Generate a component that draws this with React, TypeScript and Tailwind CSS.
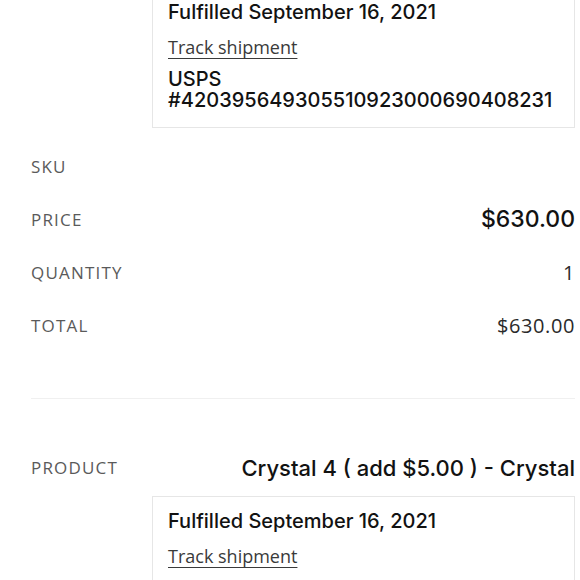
const heading = "font-['Inter','Liberation_Sans',sans-serif]";
const body = "font-['Open_Sans','Liberation_Sans',sans-serif]";

function Fulfillment({ tracking }: { tracking?: string }) {
    return (
        <div className="ml-[121px] border border-[#e6e6e6] px-[15px] pt-[11px] pb-[16px]">
            <p className={`${heading} text-[20px] leading-[26px] font-medium text-[#121212]`}>Fulfilled September 16, 2021</p>
            <a href="#" className={`${body} mt-[9px] block w-fit text-[18px] leading-[26px] text-[#3a3a3a] underline underline-offset-[4px] decoration-[1px]`}>
                Track shipment
            </a>
            {tracking && (
                <div className={`${heading} mt-[9px] text-[20px] font-medium text-[#121212]`}>
                    <p className="leading-[20px]">USPS</p>
                    <p className="leading-[22px]">{tracking}</p>
                </div>
            )}
        </div>
    );
}

function Row({ label, value, strong }: { label: string; value?: string; strong?: boolean }) {
    return (
        <div className="flex items-center justify-between h-[53px]">
            <span className={`${body} text-[17px] tracking-[0.07em] text-[#5a5a5a]`}>{label}</span>
            {value && (
                <span className={strong ? `${heading} text-[23px] font-medium text-[#121212]` : `${body} text-[20px] tracking-[0.03em] text-[#2a2a2a]`}>
                    {value}
                </span>
            )}
        </div>
    );
}

export default function App() {
    return (
        <div className="w-[580px] h-[580px] overflow-hidden bg-white">
            <div className="pl-[31px] pr-[5px] -mt-[13px]">
                <Fulfillment tracking="#420395649305510923000690408231" />
                <div className="mt-[12px]">
                    <Row label="SKU" />
                    <Row label="PRICE" value="$630.00" strong />
                    <Row label="QUANTITY" value="1" />
                    <Row label="TOTAL" value="$630.00" />
                </div>
                <div className="mt-[46px] border-t border-[#f0f0f0]" />
                <div className="mt-[44px]">
                    <div className="flex items-center justify-between h-[50px]">
                        <span className={`${body} text-[17px] tracking-[0.07em] text-[#5a5a5a]`}>PRODUCT</span>
                        <span className={`${heading} text-[22px] font-medium text-[#121212]`}>Crystal 4 ( add $5.00 ) - Crystal</span>
                    </div>
                    <div className="mt-[3px]">
                        <Fulfillment />
                    </div>
                </div>
            </div>
        </div>
    );
}
